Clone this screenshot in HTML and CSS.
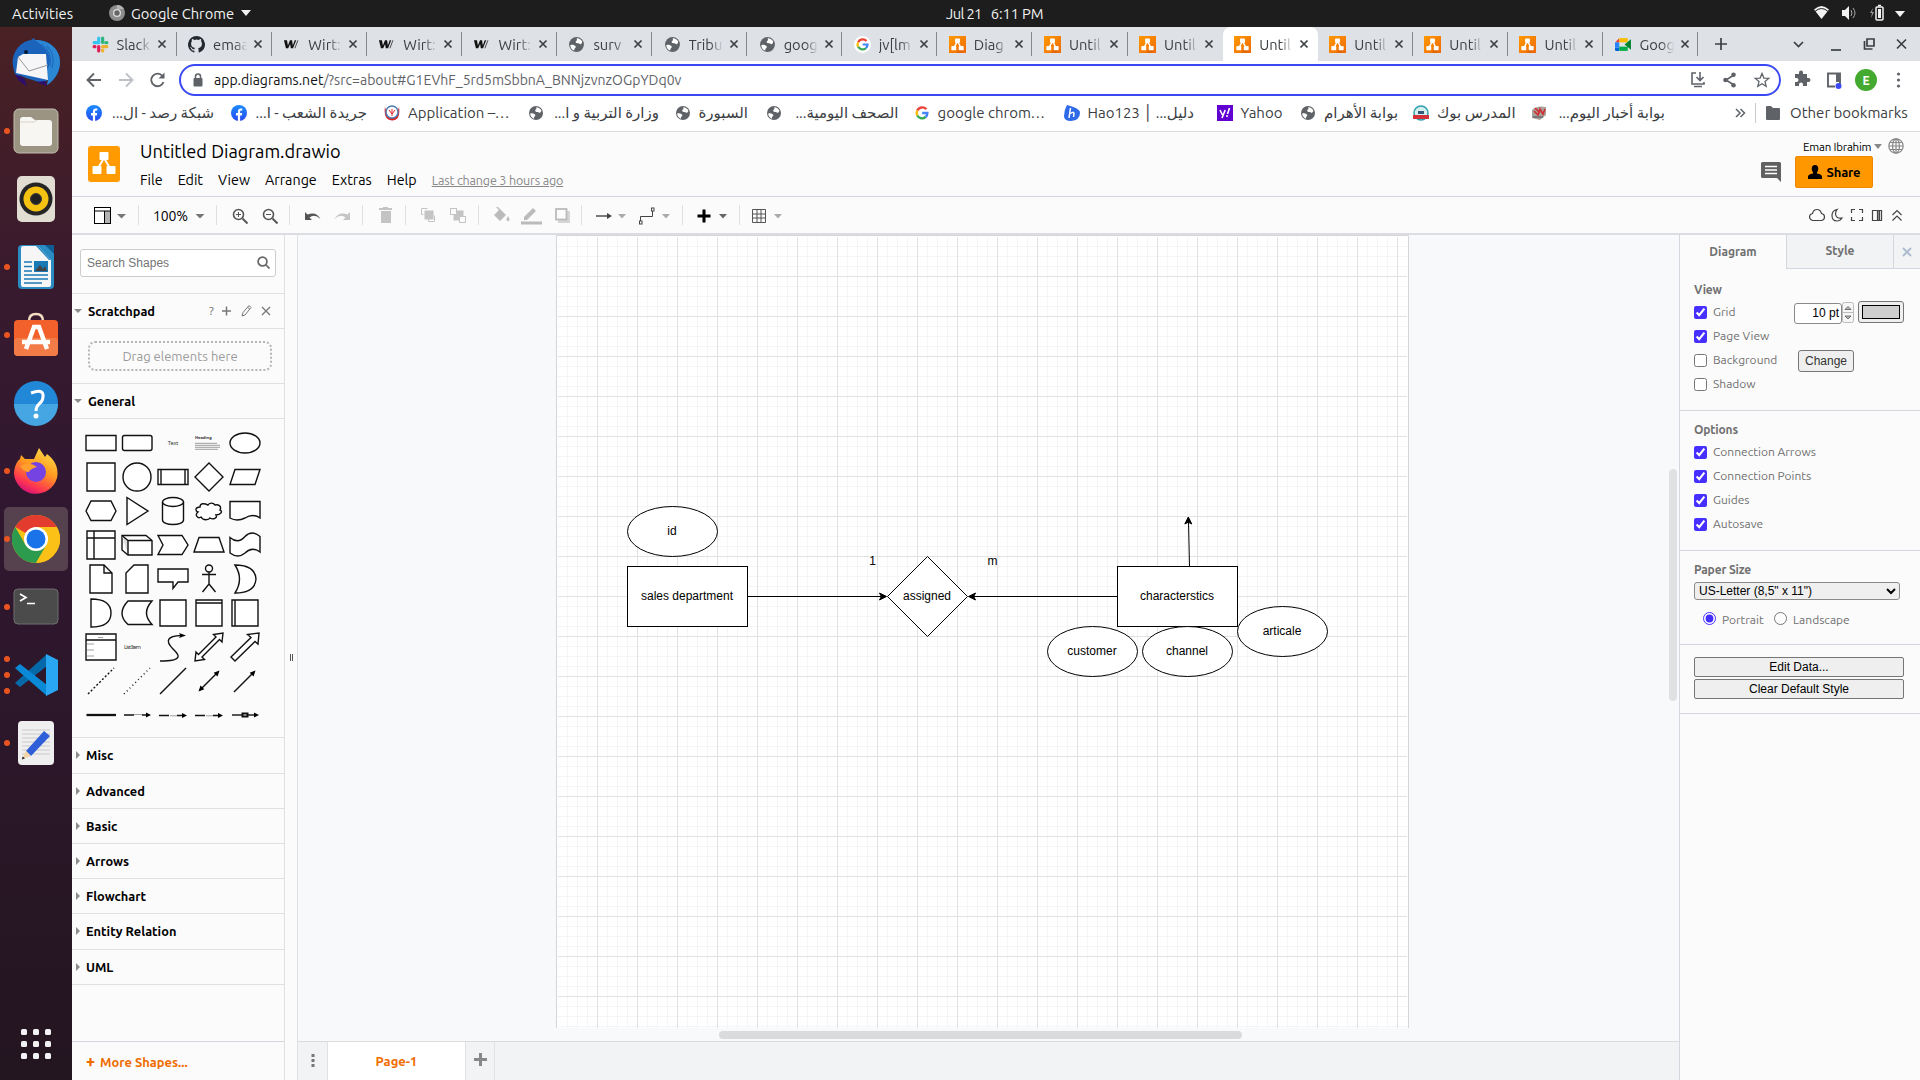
FILE: index.html
```html
<!DOCTYPE html>
<html lang="en">
<head>
<meta charset="utf-8">
<title>Untitled Diagram.drawio</title>
<link rel="stylesheet" href="styles.css">
</head>
<body>
<svg class="defs" width="0" height="0" aria-hidden="true">
  <defs>
    <linearGradient id="gOrange" x1="0" y1="0" x2="1" y2="1"><stop offset="0" stop-color="#f90"/><stop offset="1" stop-color="#ee6a0a"/></linearGradient>
    <linearGradient id="gFb" x1="0" y1="0" x2="0" y2="1"><stop offset="0" stop-color="#1a8cff"/><stop offset="1" stop-color="#2a4bf0"/></linearGradient>
    <symbol id="drawio" viewBox="0 0 16 16"><rect width="16" height="16" fill="url(#gOrange)"/><path d="M9 6l5 6-2 4H7l3-4z" fill="#d95f00" opacity=".6"/><path d="M8 5L4.6 11M8 5l3.4 6" stroke="#fff" stroke-width="1.3"/><rect x="5.7" y="2.4" width="4.6" height="4" rx=".6" fill="#fff"/><rect x="2.2" y="9.4" width="4.6" height="4" rx=".6" fill="#fff"/><rect x="9.2" y="9.4" width="4.6" height="4" rx=".6" fill="#fff"/></symbol>
    <symbol id="globe" viewBox="0 0 16 16"><circle cx="8" cy="8" r="7" fill="#5f6368"/><path d="M2.2 8.6C4 8 5.400 8.500 6.600 9.200c1.400.8.6 1.900-.2 2.400-.5.500-.2 1.700-.6 2.100C3.500 12.800 2.200 11 2.200 8.600z" fill="#fff"/><path d="M8.300 2.200c2.200 0 4.200 1.400 5.100 3.300-.4 1.300-.9 2.200-1.500 2.300-1 .2-1.100-.9-2-.9-1.200.1-2.700-.2-2.700-1.500 0-.9 1.200-.8 1.300-1.600 0-.5-.5-.8-.2-1.600z" fill="#fff"/></symbol>
    <symbol id="wirt" viewBox="0 0 18 16"><path d="M1 3.500h3.200l1 5.600L7.400 3.500h2.200l.8 5.600 2-5.600H14L10.600 12H8.300l-.8-4.600L5.500 12H3.100z" fill="#111"/><path d="M15.800 3.500L12.600 12" stroke="#444"/></symbol>
    <symbol id="google" viewBox="0 0 16 16"><g fill="none" stroke-width="2.400"><path d="M12.300 4.300A5.400 5.400 0 0 0 3.300 5.500" stroke="#ea4335"/><path d="M3.300 5.500a5.400 5.400 0 0 0 0 5" stroke="#fbbc05"/><path d="M3.300 10.500a5.400 5.400 0 0 0 8.300 1.500" stroke="#34a853"/><path d="M11.600 12a5.400 5.400 0 0 0 1.800-4H8.200" stroke="#4285f4"/></g></symbol>
    <symbol id="fb" viewBox="0 0 16 16"><circle cx="8" cy="8" r="8" fill="url(#gFb)"/><path d="M6.900 16v-5.600H5V8.100h1.900V6.500c0-2 1.200-3 2.900-3l1.500.1v2h-1c-.9 0-1.200.5-1.200 1.200v1.300h2.100l-.4 2.300H9.100V16z" fill="#fff"/></symbol>
    <symbol id="x" viewBox="0 0 10 10"><path d="M1.500 1.500l7 7M8.500 1.500l-7 7" stroke="#3c4043" stroke-width="1.700"/></symbol>
  </defs>
</svg>

<header class="topbar">
  <span class="activities">Activities</span>
  <svg class="app-ico" width="16" height="16"><circle cx="8" cy="8" r="8" fill="#8d8d8d"/><path d="M8 0a8 8 0 0 1 7 4H8z" fill="#b5b5b5"/><circle cx="8" cy="8" r="4" fill="#ddd"/><circle cx="8" cy="8" r="2.700" fill="#666"/></svg>
  <span class="app-name">Google Chrome</span>
  <svg class="caret" width="10" height="6"><path d="M0 0h10L5 6z" fill="#f2f2f2"/></svg>
  <span class="clock"><span>Jul 21</span><span>6:11 PM</span></span>
  <svg class="tray" width="96" height="20">
    <path d="M0 6.500Q7.500-.5 15 6.500L7.500 16z" fill="#f2f2f2"/><path d="M.8 6Q7.500 0 14.200 6" stroke="#1d1d1d" stroke-width="1" transform="translate(0 2.500)" fill="none"/>
    <path d="M28 7h3l4-4v14l-4-4h-3z" fill="#f2f2f2"/><path d="M37 7q2 3 0 6M39 5q4 5 0 10" stroke="#aaa" fill="none"/>
    <path d="M59 5l-3 5h2l-1 5 3-6h-2z" fill="#999"/><rect x="62" y="4" width="7" height="13" rx="1" fill="none" stroke="#f2f2f2" stroke-width="1.500"/><rect x="64" y="6" width="3" height="9" fill="#f2f2f2"/><path d="M64 2.500h3" stroke="#f2f2f2" stroke-width="1.500"/>
    <path d="M81 8h10l-5 6z" fill="#f2f2f2"/>
  </svg>
</header>

<div class="desk">
<nav class="dock">
  <div class="app"><svg width="50" height="50" viewBox="0 0 50 50"><path d="M2 28C0 16 8 4 20 2l3-2 1 2c14-1 25 9 25 22 0 9-4 17-13 23l1-5-6 3-16-5-7-3 6 9C7 43 3 36 2 28z" fill="#1c63bb"/><path d="M24 2c14 0 25 9 25 22 0 9-5 18-13 23 3-8-2-13 2-19C42 16 32 8 24 2z" fill="#2b86d3"/><path d="M30 6q12 8 9 22M36 8q9 9 5 22" stroke="#1c63bb" fill="none"/><path d="M7 19l5-3 23 0 2 26L5 35z" fill="#f6f6f8"/><path d="M7 19l11 14 19-6" stroke="#999" fill="none"/><path d="M4 36c3 7 6 9 12 12l-3-8zM25 44l9-1 2 5z" fill="#2e0f6b"/><circle cx="15" cy="14" r="2" fill="#0a1c3a"/></svg></div>
  <div class="app"><i class="dot"></i><svg width="46" height="46" viewBox="0 0 46 46"><rect x="1" y="1" width="44" height="44" rx="5" fill="#9c9483" stroke="#c4bdae"/><path d="M7 12q0-3 3-3h8l4 3h14q3 0 3 3v20q0 3-3 3H10q-3 0-3-3z" fill="#f8f6f3"/><path d="M7 14h14l3-2" stroke="#d8d2c8" fill="none"/></svg></div>
  <div class="app"><svg width="38" height="46" viewBox="0 0 38 46"><rect width="38" height="46" rx="5" fill="#e2ddd3"/><circle cx="19" cy="23" r="16.500" fill="#252525"/><circle cx="19" cy="23" r="12.500" fill="#f5c211"/><circle cx="19" cy="23" r="5.500" fill="#222" stroke="#3c3c3c"/></svg></div>
  <div class="app"><i class="dot"></i><svg width="38" height="46" viewBox="0 0 38 46"><rect x="1" y="1" width="36" height="44" rx="4" fill="#2b8cc4"/><path d="M4 4q0-2 2-2h15l13 14v25q0 2-2 2H6q-2 0-2-2z" fill="#f6f6f6"/><path d="M21 0h8l9 9v8z" fill="#3a1a2c" opacity=".0"/><path d="M28 1h9v9z" fill="#0d5c92"/><path d="M21 2l13 14h-2L19 2z" fill="#2b8cc4"/><path d="M7 18h8M7 22.500h8M7 27h8M7 31h24M7 35h24M7 39h18" stroke="#1a7ab5" stroke-width="1.700"/><rect x="17" y="17" width="14" height="11" fill="#1a7ab5"/><path d="M18 27l5-6 3 4 2-3 2 5z" fill="#444"/></svg></div>
  <div class="app"><i class="dot"></i><svg width="46" height="46" viewBox="0 0 46 46"><path d="M16 9q0-7 7-7t7 7" stroke="#f5dcc0" stroke-width="2.500" fill="none"/><rect x="1" y="8" width="44" height="36" rx="4" fill="#f2602c"/><rect x="1" y="26" width="44" height="18" rx="4" fill="#f37b47"/><path d="M13 37l8-22h5l8 22M9 30h28" stroke="#fff" stroke-width="4.500" fill="none"/></svg></div>
  <div class="app"><svg width="46" height="46" viewBox="0 0 46 46"><circle cx="23" cy="23" r="22" fill="#2188d8"/><path d="M1 24h44a22 22 0 0 1-44 0z" fill="#46a6e4"/><path d="M18 13q13-5 12 4 0 4-4 7-3 3-3 7" stroke="#fff" stroke-width="3" fill="none"/><circle cx="23" cy="36" r="2.500" fill="#fff"/></svg></div>
  <div class="app"><i class="dot"></i><svg width="48" height="48" viewBox="0 0 48 48"><defs><linearGradient id="ff" x1=".8" y1="0" x2=".3" y2="1"><stop offset="0" stop-color="#ffe04b"/><stop offset=".45" stop-color="#ff9a1f"/><stop offset=".8" stop-color="#ff3750"/><stop offset="1" stop-color="#d0107a"/></linearGradient></defs><path d="M8 12l1-4 4 4 9 0 5-11 6 9 2-3c8 6 12 14 10 24A22 22 0 0 1 2 27c0-6 2-12 6-15z" fill="url(#ff)"/><circle cx="24" cy="25" r="10" fill="#7543e2"/><path d="M8 19q10-5 17 1-7 2-8 5-5 0-9-6z" fill="#ffa02e"/></svg></div>
  <div class="app active"><i class="dot"></i><svg width="48" height="48" viewBox="-24 -24 48 48"><circle r="24" fill="#fbc116"/><path d="M0 0L-20.800-12A24 24 0 0 1 20.800-12H0z" fill="#e33b2e"/><path d="M-20.800-12A24 24 0 0 0 0 24L10.400 6-10.400 6z" fill="#2d9b4e"/><path d="M0 24L10.400 6 0-12H20.800A24 24 0 0 1 0 24z" fill="#fbc116"/><circle r="12" fill="#fff"/><circle r="9.500" fill="#1a73e8"/></svg></div>
  <div class="app"><i class="dot"></i><svg width="46" height="38" viewBox="0 0 46 38"><rect x="1" y="1" width="44" height="35" rx="4" fill="#4b4b4b" stroke="#6e6e6e"/><path d="M7 6l6 3.500L7 13M14 15.500h8" stroke="#fff" stroke-width="1.700" fill="none"/></svg></div>
  <div class="app"><i class="dot"></i><i class="dot"></i><i class="dot"></i><svg width="44" height="44" viewBox="0 0 44 44"><path d="M1 30l5 4 27-21V1z" fill="#0568a8"/><path d="M1 15l5-4 27 21v11z" fill="#0a8ad6"/><path d="M32 1l12 6v30l-12 6z" fill="#29a7f3"/></svg></div>
  <div class="app"><i class="dot"></i><svg width="38" height="46" viewBox="0 0 38 46"><rect x="1" y="1" width="36" height="44" rx="4" fill="#efefef"/><path d="M5 10h28M5 14h28M5 18h28M5 22h28M5 26h28M5 30h28M5 34h28" stroke="#c9c9c9"/><path d="M9 31L27 11l6 5-19 20z" fill="#2f5fd8"/><path d="M9 31l5 5-9 3z" fill="#f3d3a8"/><path d="M5.500 36.500l2.500 1.700-3 1.300z" fill="#222"/></svg></div>
  <div class="grid9"><i></i><i></i><i></i><i></i><i></i><i></i><i></i><i></i><i></i></div>
</nav>

<main class="browser">
  <div class="tabstrip">
    <div class="tab"><svg width="17" height="17" viewBox="0 0 16 16"><g stroke-width="3" stroke-linecap="round"><path d="M6.300 2v4" stroke="#36c5f0"/><path d="M2 6.300h4.300" stroke="#36c5f0"/><path d="M10 2v4M14 6.300h-1" stroke="#2eb67d"/><path d="M10 10h4M10 14v-.8" stroke="#ecb22e"/><path d="M6.300 10v4M2 10h.8" stroke="#e01e5a"/></g></svg><span>Slack</span><svg class="cl"><use href="#x"/></svg></div>
    <div class="tab"><svg width="17" height="17" viewBox="0 0 16 16"><path fill="#24292f" d="M8 0a8 8 0 0 0-2.500 15.600c.4.100.5-.2.500-.4v-1.500c-2 .4-2.600-.9-2.800-1.300-.1-.3-.5-1-.8-1.200-.3-.1-.7-.5 0-.5s1.100.6 1.300.8c.7 1.200 1.900.9 2.400.7.100-.5.300-.9.500-1.100-1.800-.2-3.700-.9-3.700-4 0-.9.300-1.600.8-2.100-.1-.2-.4-1 .1-2.100 0 0 .7-.2 2.200.8a7 7 0 0 1 4 0c1.500-1 2.200-.8 2.200-.8.400 1.100.2 1.900.1 2.100.5.600.8 1.300.8 2.200 0 3.100-1.900 3.800-3.700 4 .3.200.6.700.6 1.500v2.500c0 .2.100.5.500.4A8 8 0 0 0 8 0z"/></svg><span>emaa</span><svg class="cl"><use href="#x"/></svg></div>
    <div class="tab"><svg width="17" height="17"><use href="#wirt"/></svg><span>Wirt:</span><svg class="cl"><use href="#x"/></svg></div>
    <div class="tab"><svg width="17" height="17"><use href="#wirt"/></svg><span>Wirt:</span><svg class="cl"><use href="#x"/></svg></div>
    <div class="tab"><svg width="17" height="17"><use href="#wirt"/></svg><span>Wirt:</span><svg class="cl"><use href="#x"/></svg></div>
    <div class="tab"><svg width="17" height="17"><use href="#globe"/></svg><span>surv</span><svg class="cl"><use href="#x"/></svg></div>
    <div class="tab"><svg width="17" height="17"><use href="#globe"/></svg><span>Tribu</span><svg class="cl"><use href="#x"/></svg></div>
    <div class="tab"><svg width="17" height="17"><use href="#globe"/></svg><span>goog</span><svg class="cl"><use href="#x"/></svg></div>
    <div class="tab"><svg width="17" height="17" viewBox="0 0 16 16"><circle cx="8" cy="8" r="8" fill="#fff"/><use href="#google" x="1" y="1" width="14" height="14"/></svg><span>jv[lm</span><svg class="cl"><use href="#x"/></svg></div>
    <div class="tab"><svg width="17" height="17"><use href="#drawio"/></svg><span>Diag</span><svg class="cl"><use href="#x"/></svg></div>
    <div class="tab"><svg width="17" height="17"><use href="#drawio"/></svg><span>Until</span><svg class="cl"><use href="#x"/></svg></div>
    <div class="tab nosep"><svg width="17" height="17"><use href="#drawio"/></svg><span>Until</span><svg class="cl"><use href="#x"/></svg></div>
    <div class="tab current"><svg width="17" height="17"><use href="#drawio"/></svg><span>Until</span><svg class="cl"><use href="#x"/></svg></div>
    <div class="tab"><svg width="17" height="17"><use href="#drawio"/></svg><span>Until</span><svg class="cl"><use href="#x"/></svg></div>
    <div class="tab"><svg width="17" height="17"><use href="#drawio"/></svg><span>Until</span><svg class="cl"><use href="#x"/></svg></div>
    <div class="tab"><svg width="17" height="17"><use href="#drawio"/></svg><span>Until</span><svg class="cl"><use href="#x"/></svg></div>
    <div class="tab"><svg width="17" height="17" viewBox="0 0 16 16"><path d="M0 6l4-4v4z" fill="#ea4335"/><path d="M4 2h8v4H4z" fill="#fbbc04"/><path d="M0 6h4v5H0z" fill="#2684fc"/><path d="M0 11h4v3H1q-1 0-1-1z" fill="#0066da"/><path d="M4 10h8v4H4z" fill="#00ac47"/><path d="M9 8l6-5v10z" fill="#00832d"/></svg><span>Goog</span><svg class="cl"><use href="#x"/></svg></div>
    <svg class="win" width="221" height="34" fill="none" stroke="#3c4043" stroke-width="1.700"><path d="M17 17h12M23 11v12"/><path d="M96 15l4.500 4.500 4.500-4.500"/><path d="M133 23h10"/><path d="M169 12h7v7h-7zM166.500 14v8h8"/><path d="M199 12.500l9 9M208 12.500l-9 9"/></svg>
  </div>

  <div class="omni">
    <svg width="107" height="37" fill="none" stroke="#5f6368" stroke-width="1.900"><path d="M29 19H16M22 12.500L15.500 19l6.500 6.500"/><path d="M47 19h13M54 12.500l6.500 6.500-6.500 6.500" stroke="#bdc1c6"/><path d="M90.500 15a6.300 6.300 0 1 0 1 6"/><path d="M92.500 11.500v6h-6z" fill="#5f6368" stroke="none"/></svg>
    <div class="pill">
      <svg width="12" height="16"><rect x="1.500" y="6" width="9" height="8.500" rx="1" fill="#5f6368"/><path d="M3.500 7V4.500a2.500 2.500 0 0 1 5 0V7" stroke="#5f6368" stroke-width="1.500" fill="none"/></svg>
      <span class="url"><b>app.diagrams.net</b>/?src=about#G1EVhF_5rd5mSbbnA_BNNjzvnzOGpYDq0v</span>
      <svg width="84" height="20" fill="none" stroke="#5f6368" stroke-width="1.600"><path d="M7 3H3v11h12v-2M11 2v8M7.500 7l3.500 3.500L14.500 7M5 16.500h8"/><path d="M37 10l8-5M37 10l8 5"/><g fill="#5f6368" stroke="none"><circle cx="36.500" cy="10" r="2.300"/><circle cx="44.500" cy="4.700" r="2.300"/><circle cx="44.500" cy="15.300" r="2.300"/></g><path d="M73 3.500l1.900 4.600 4.900.3-3.800 3.200 1.200 4.800-4.200-2.600-4.200 2.600 1.200-4.800-3.800-3.200 4.900-.3z" stroke-width="1.300"/></svg>
    </div>
    <svg class="ext" width="139" height="37"><path d="M14 14h4v-1.500a2 2 0 0 1 4 0V14h4v4h1.500a2 2 0 0 1 0 4H26v4h-4v-1.500a2 2 0 0 0-4 0V26h-4v-4h1.500a2 2 0 0 0 0-4H14z" fill="#5f6368" transform="translate(0 -1)"/><path d="M59 23v-10.500H47V25.500h7" fill="none" stroke="#5f6368" stroke-width="1.900"/><path d="M55 12h4v9h-4z" fill="#5f6368"/><circle cx="57.500" cy="25" r="3" fill="#3b49f5"/><circle cx="85" cy="19" r="11" fill="#43a92f"/><text x="85" y="23.500" text-anchor="middle" class="ava">E</text><g fill="#5f6368"><circle cx="117.500" cy="13" r="1.600"/><circle cx="117.500" cy="19" r="1.600"/><circle cx="117.500" cy="25" r="1.600"/></g></svg>
  </div>

  <div class="bookmarks">
    <div><svg width="16" height="16"><use href="#fb"/></svg><span dir="rtl" style="width:104px">شبكة رصد - ال<i>...</i></span></div>
    <div><svg width="16" height="16"><use href="#fb"/></svg><span dir="rtl" style="width:112px">جريدة الشعب - ا<i>...</i></span></div>
    <div><svg width="16" height="16" viewBox="0 0 16 16"><path d="M1 2q-2 13 7 13.500T15 2l-2 6H3z" fill="#d8262c"/><circle cx="8" cy="7" r="6" fill="#fff" stroke="#4a7fb5" stroke-width="1.500"/><path d="M5 5l3 4 3-4M8 4v7" stroke="#d8262c" fill="none"/></svg><span>Application –<i>...</i></span></div>
    <div><svg width="16" height="16"><use href="#globe"/></svg><span dir="rtl" style="width:107px">وزارة التربية و ا<i>...</i></span></div>
    <div><svg width="16" height="16"><use href="#globe"/></svg><span dir="rtl">السبورة</span></div>
    <div><svg width="16" height="16"><use href="#globe"/></svg><span dir="rtl" style="width:109px">الصحف اليومية<i>...</i></span></div>
    <div><svg width="16" height="16"><use href="#google"/></svg><span>google chrom<i>...</i></span></div>
    <div><svg width="16" height="16" viewBox="0 0 16 16"><path d="M3 0q13 3 13 8 0 7-9 8-7 0-7-5Q0 5 3 0z" fill="#2f6ae8"/><path d="M6.500 3L5 13M5.700 9q4-3 4.300-.5L9.500 12" stroke="#fff" stroke-width="1.500" fill="none"/></svg><span>Hao123 │ <bdi dir="rtl">دليل<i>...</i></bdi></span></div>
    <div><svg width="16" height="16" viewBox="0 0 16 16"><rect width="16" height="16" fill="#6001d2"/><path d="M3 5l2.500 5M8.200 5L5 13M12.500 3l-2 6" stroke="#fff" stroke-width="1.600"/><circle cx="10" cy="11" r="1" fill="#fff"/></svg><span>Yahoo</span></div>
    <div><svg width="16" height="16"><use href="#globe"/></svg><span dir="rtl">بوابة الأهرام</span></div>
    <div><svg width="16" height="16" viewBox="0 0 16 16"><circle cx="8" cy="8" r="7" fill="#d5eef0" stroke="#2f9fae" stroke-width="1.500"/><path d="M5 6h6v3H5z" fill="#345a7a"/><path d="M0 10h16v4H0z" fill="#d3303a"/></svg><span dir="rtl">المدرس بوك</span></div>
    <div><svg width="16" height="16" viewBox="0 0 16 16"><path d="M1 5q5-5 14-3v8l-6 5-8-2z" fill="#a9a29a"/><path d="M3 6l4 4 2-6 3 5 2-5M4 3l5 5" stroke="#cf2f35" stroke-width="1.700" fill="none"/><path d="M2 12h10" stroke="#777" stroke-width="2"/></svg><span dir="rtl" style="width:110px">بوابة أخبار اليوم<i>...</i></span></div>
    <div class="other"><svg width="47" height="24"><path d="M1 8l4 4-4 4M5.500 8l4 4-4 4" stroke="#5f6368" stroke-width="1.500" fill="none"/><path d="M20.500 2v20" stroke="#c8cbd0"/><path d="M31 6q0-1 1-1h4l2 2h6q1 0 1 1v10q0 1-1 1H32q-1 0-1-1z" fill="#5f6368"/></svg><span>Other bookmarks</span></div>
  </div>

  <div class="apphead">
    <svg class="logo" width="32" height="36"><rect width="32" height="36" rx="3" fill="#ff9b00"/><path d="M16 12L9 24M16 12l7 12" stroke="#fff" stroke-width="2"/><rect x="11.500" y="6" width="9" height="8" rx="1" fill="#fff"/><rect x="4.500" y="20" width="9" height="8" rx="1" fill="#fff"/><rect x="18.500" y="20" width="9" height="8" rx="1" fill="#fff"/></svg>
    <div class="titles">
      <div class="doc">Untitled Diagram.drawio</div>
      <div class="menus"><span>File</span><span>Edit</span><span>View</span><span>Arrange</span><span>Extras</span><span>Help</span><a>Last change 3 hours ago</a></div>
    </div>
    <div class="user">
      <div class="who"><span>Eman Ibrahim</span><svg width="8" height="5"><path d="M0 0h8L4 5z" fill="#888"/></svg><svg width="16" height="16" fill="none" stroke="#888" stroke-width="1.200"><circle cx="8" cy="8" r="7.200"/><ellipse cx="8" cy="8" rx="3.400" ry="7.200"/><path d="M8 1v14M1 8h14M2 4.500h12M2 11.500h12"/></svg></div>
      <div class="acts"><svg width="20" height="20"><path d="M1.500 0h17Q20 0 20 1.500V20l-4-4H1.500Q0 16 0 14.500v-13Q0 0 1.500 0z" fill="#616161"/><path d="M4 4.500h12M4 8h12M4 11.500h12" stroke="#fff" stroke-width="1.500"/></svg><button class="share"><svg width="14" height="14"><path d="M7 0q3.300 0 3.300 4 0 2-1.300 3.300V8.500q5 1 5 3V14H0v-2.500q0-2 5-3V7.300Q3.700 6 3.700 4 3.700 0 7 0z"/></svg>Share</button></div>
    </div>
  </div>

  <div class="tools">
    <svg width="67" height="36"><rect x="22.500" y="10.500" width="16" height="16" fill="#fff" stroke="#000"/><rect x="33" y="14" width="5" height="12" fill="#b3b3b3"/><path d="M22 14h17M32.500 14v12" stroke="#000"/><path d="M45 17h9l-4.500 4.500z" fill="#777"/></svg>
    <svg width="78" height="36"><text x="14" y="24" class="pct" textLength="35">100%</text><path d="M56.500 17h9l-4.500 4.500z" fill="#777"/></svg>
    <svg width="73" height="36" fill="none" stroke="#555" stroke-width="1.600"><circle cx="21.500" cy="17.500" r="5"/><path d="M25.500 21.500l5 5" stroke-width="2"/><path d="M19 17.500h5M21.500 15v5" stroke-width="1"/><circle cx="51.500" cy="17.500" r="5"/><path d="M55.500 21.500l5 5" stroke-width="2"/><path d="M49 17.500h5" stroke-width="1"/></svg>
    <svg width="73" height="36"><path d="M15 15v8h7l-2.500-2.500q5-4 11 1.500-4-8-13-4.500z" fill="#555"/><path d="M60 15v8h-7l2.500-2.500q-5-4-11 1.500 4-8 13-4.500z" fill="#c4c4c4"/></svg>
    <svg width="43" height="36" fill="#c4c4c4"><path d="M16 11h4v-1h5v1h4v2H16zM18 14h10v12H18z"/></svg>
    <svg width="73" height="36" fill="none" stroke="#c4c4c4"><rect x="19" y="14" width="8" height="8" fill="#c4c4c4"/><path d="M21.500 11.500h-6v6h2M28.500 18.500v6h-6v-2"/><rect x="48" y="14" width="9" height="9" fill="#c4c4c4"/><rect x="44.500" y="11.500" width="6" height="6" fill="#fbfbfb"/><rect x="53.500" y="19.500" width="6" height="6" fill="#fbfbfb"/></svg>
    <svg width="103" height="36"><path d="M19 10l8 8-6 6-6-6 5-5-3-3z" fill="#bbb"/><path d="M29 19q3 5 0 5t0-5z" fill="#bbb"/><path d="M45 20l9-9 3 3-9 9h-3z" fill="#bbb"/><path d="M42 26h21" stroke="#bbb" stroke-width="3"/><rect x="79" y="14" width="12" height="12" fill="#d5d5d5"/><rect x="77" y="12" width="10.500" height="10.500" fill="#fbfbfb" stroke="#bbb" stroke-width="1.800"/></svg>
    <svg width="101" height="36"><path d="M14 19h14" stroke="#444" stroke-width="1.400"/><path d="M25 16l5 3-5 3z" fill="#444"/><path d="M36 17h8l-4 4.500z" fill="#aaa"/><path d="M58.500 25v-5.500h12V14" stroke="#444" fill="none"/><rect x="57.500" y="24" width="2.500" height="3" fill="#fff" stroke="#444"/><rect x="69.500" y="11" width="2.500" height="3" fill="#fff" stroke="#444"/><path d="M80 17h8l-4 4.500z" fill="#aaa"/></svg>
    <svg width="57" height="36"><path d="M14.500 19h13M21 12.500v13" stroke="#000" stroke-width="3"/><path d="M36 17h8l-4 4.500z" fill="#666"/></svg>
    <svg width="60" height="36" fill="none" stroke="#555"><path d="M12.500 12.500h13v13h-13zM17 12.500v13M21 12.500v13M12.500 17h13M12.500 21h13"/><path d="M34 17h8l-4 4.500z" fill="#aaa" stroke="none"/></svg>
    <svg class="view-tools" width="111" height="36" fill="none" stroke="#444" stroke-width="1.200"><path d="M3.500 23.500q-3-1-3-3.500 0-3 3-3.500 1-4 4.500-4t4.500 4q3 .5 3 3.500t-3 3.500z"/><path d="M28 12.500q-5 1-5 6 0 5.500 5 5.500 3 0 5-3-6 1-6.500-4 0-3 1.500-4.500z"/><path d="M42.500 16v-3.500H46M50 12.500h3.500V16M53.500 20v3.500H50M46 23.500h-3.500V20"/><path d="M63.500 13.500h9v10h-9z"/><path d="M68.500 13.500h2v10h-2z" fill="#999"/><path d="M83.500 18l4.500-4.500 4.500 4.500M83.500 23.500L88 19l4.500 4.500"/></svg>
  </div>

  <div class="work">
    <aside class="side">
      <div class="find"><div class="box"><span>Search Shapes</span><svg width="13" height="13" fill="none" stroke="#666" stroke-width="1.700"><circle cx="5.500" cy="5.500" r="4.400"/><path d="M8.500 8.500l4 4"/></svg></div></div>
      <div class="sec open h35">Scratchpad<svg class="sctl" width="64" height="14" stroke="#777" fill="none"><text x="1" y="11" class="q">?</text><path d="M14 7h9M18.500 2.500v9" stroke-width="1.500"/><path d="M34 12l1-3.500L41 1.500l2 2-6 7.500zM39.500 3l2 2"/><path d="M54 3l8 8M62 3l-8 8" stroke-width="1.300"/></svg></div>
      <div class="drop"><div>Drag elements here</div></div>
      <div class="sec open h35">General</div>
      <div class="palette">
        <svg viewBox="-18 -17 36 34"><path d="M-15-7.500h30v15h-30z"/></svg>
        <svg viewBox="-18 -17 36 34"><rect x="-14.500" y="-7.500" width="29.500" height="15" rx="2"/></svg>
        <svg viewBox="-18 -17 36 34"><text x="0" y="1.500" text-anchor="middle" class="t5">Text</text></svg>
        <svg viewBox="-18 -17 36 34"><text x="-14" y="-4" class="t4b">Heading</text><path d="M-14 .3h22M-14 2.300h25M-14 4.300h25M-14 6.300h23" class="lines"/></svg>
        <svg viewBox="-18 -17 36 34"><ellipse rx="15" ry="10"/></svg>
        <svg viewBox="-18 -17 36 34"><path d="M-14-14h28v28h-28z"/></svg>
        <svg viewBox="-18 -17 36 34"><circle r="14"/></svg>
        <svg viewBox="-18 -17 36 34"><path d="M-15-7.500h30v15h-30zM-12-7.500v15M12-7.500v15"/></svg>
        <svg viewBox="-18 -17 36 34"><path d="M0-14L14 0 0 14-14 0z"/></svg>
        <svg viewBox="-18 -17 36 34"><path d="M-10-7.500h25l-5 15h-25z"/></svg>
        <svg viewBox="-18 -17 36 34"><path d="M-15 0l5-10h20l5 10-5 9.500h-20z"/></svg>
        <svg viewBox="-18 -17 36 34"><path d="M-10-13.500L11 0l-21 13.500z"/></svg>
        <svg viewBox="-18 -17 36 34"><path d="M-10.500-9v18c0 6 21 6 21 0V-9"/><ellipse cy="-9" rx="10.500" ry="4.500"/></svg>
        <svg viewBox="-18 -17 36 34"><path d="M-9-4c-5 0-5 4-2 5-4 3 0 7 3 5 2 4 8 3 9 1 3 2 8 0 6-3 5 0 7-4 4-5 2-4-2-6-5-5-2-3-6-2-7 0-4-2-8-2-8 2z"/></svg>
        <svg viewBox="-18 -17 36 34"><path d="M-15-9.500h30V7q-7-5-15 0-8 4-15 0z"/></svg>
        <svg viewBox="-18 -17 36 34"><path d="M-14-14h28v28h-28zM-7-14v28M-14-7h28"/></svg>
        <svg viewBox="-18 -17 36 34"><path d="M-15-9.500h24l6 5V10h-24l-6-5z"/><path d="M-15-9.500l6 5V10M-9-4.500h24" fill="#ddd"/></svg>
        <svg viewBox="-18 -17 36 34"><path d="M-15-9.500h24L15 0 9 9.500h-24L-10 0z"/></svg>
        <svg viewBox="-18 -17 36 34"><path d="M-15 7l5-14.500h20L15 7z"/></svg>
        <svg viewBox="-18 -17 36 34"><path d="M-15-7.500q8 7 15-1 7-7 15 0V7q-8-6-15 1-7 6-15 0z"/></svg>
        <svg viewBox="-18 -17 36 34"><path d="M-11-14H3l8 8v20h-22zM3-14v8h8"/></svg>
        <svg viewBox="-18 -17 36 34"><path d="M-3-14h14v28h-22V-6z"/></svg>
        <svg viewBox="-18 -17 36 34"><path d="M-15-10h30V3H5l-5 6.500V3h-15z"/></svg>
        <svg viewBox="-18 -17 36 34"><circle cy="-10.500" r="3.500"/><path d="M0-7V5l-6.500 8M0 5l6.500 8M-7-4.500H7"/></svg>
        <svg viewBox="-18 -17 36 34"><path d="M-10-14Q10-14 11 0 10 14-10 14-1 0-10-14z"/></svg>
        <svg viewBox="-18 -17 36 34"><path d="M-10-14q20 0 20 14t-20 14z"/></svg>
        <svg viewBox="-18 -17 36 34"><path d="M-9-12h24q-11 12 0 23.500H-9q-12-11 0-23.500z"/></svg>
        <svg viewBox="-18 -17 36 34"><path d="M-13-13h26v26h-26z"/></svg>
        <svg viewBox="-18 -17 36 34"><path d="M-13-13h26v26h-26zM-13-10h26"/></svg>
        <svg viewBox="-18 -17 36 34"><path d="M-13-13h26v26h-26zM-10-13v26"/></svg>
        <svg viewBox="-18 -17 36 34"><path d="M-15-13h30v26h-30zM-15-7h30"/><path d="M-3-9.500h5M-14-3h7M-14 3h7M-14 9h7" class="lines"/></svg>
        <svg viewBox="-18 -17 36 34"><text x="-13" y="1.500" class="li" textLength="17">List Item</text></svg>
        <svg viewBox="-18 -17 36 34"><path d="M-13 14C14 14 4 6 0 2-8-6-6-11 8-11.500" fill="none"/><path d="M6-14l7 2.500L6-9l1.500-2.500z" class="k"/></svg>
        <svg viewBox="-18 -17 36 34"><path d="M14-14l-1 9-2.500-2.500L-7 10l2.500 2.500-9.500 1.500 1-9 2.500 2.500L7-10 4.500-12.500z"/></svg>
        <svg viewBox="-18 -17 36 34"><path d="M14-14l-1 11-3-2.500L-10 14l-4-4L6-9.500 2.500-12.500z"/></svg>
        <svg viewBox="-18 -17 36 34"><path d="M-13 13L13-13" stroke-dasharray="2 2"/></svg>
        <svg viewBox="-18 -17 36 34"><path d="M-13 13L13-13" stroke-dasharray="1 3"/></svg>
        <svg viewBox="-18 -17 36 34"><path d="M-13 13L13-13"/></svg>
        <svg viewBox="-18 -17 36 34"><path d="M-9 9L9-9"/><path d="M10.500-10.500l-2 6-3.800-3.800zM-10.500 10.500l2-6 3.800 3.800z" class="k"/></svg>
        <svg viewBox="-18 -17 36 34"><path d="M-11 11L9-9"/><path d="M10.500-10.500l-2 6-3.800-3.800z" class="k"/></svg>
        <svg viewBox="-18 -17 36 34"><path d="M-14.500 0h29.500" stroke-width="2.300"/></svg>
        <svg viewBox="-18 -17 36 34"><path d="M-13 0h10M5 0h6"/><path d="M-3-.5h8" class="lines"/><path d="M14 0L9-2.500v5z" class="k"/></svg>
        <svg viewBox="-18 -17 36 34"><path d="M-14 .5h10M4 .5h7"/><path d="M-3 .8h7" class="lines"/><path d="M14 .5L9-2v5z" class="k"/></svg>
        <svg viewBox="-18 -17 36 34"><path d="M-14 .5h10M4 .5h7"/><path d="M-3 .8h7" class="lines"/><path d="M14 .5L9-2v5z" class="k"/></svg>
        <svg viewBox="-18 -17 36 34"><path d="M-13 0h24"/><path d="M-2.500-1.500h5v3h-5z" stroke-width="2"/><path d="M14 0L9-2.500v5z" class="k"/></svg>
      </div>
      <div class="sec h36">Misc</div>
      <div class="sec h35">Advanced</div>
      <div class="sec h35">Basic</div>
      <div class="sec h35">Arrows</div>
      <div class="sec h35">Flowchart</div>
      <div class="sec h36">Entity Relation</div>
      <div class="sec h35">UML</div>
      <div class="more"><b>+</b> More Shapes...</div>
    </aside>
    <div class="split"><i></i><i></i></div>

    <section class="center">
      <div class="canvas">
        <svg class="page" width="853" height="793" viewBox="556 235 853 793">
          <defs>
            <pattern id="minor" x="7" y="6" width="10" height="10" patternUnits="userSpaceOnUse"><path d="M.5 0v10M0 .5h10" stroke="#f5f5f5"/></pattern>
            <pattern id="major" x="37" y="36" width="40" height="40" patternUnits="userSpaceOnUse"><path d="M.5 0v40M0 .5h40" stroke="#e2e2e2"/></pattern>
          </defs>
          <rect x="556" y="235" width="853" height="793" fill="#fff"/>
          <rect x="558" y="237" width="849" height="791" fill="url(#minor)"/>
          <rect x="558" y="237" width="849" height="791" fill="url(#major)"/>
          <path d="M556.500 1028V235.500h852V1028" fill="none" stroke="#d4d6da"/>
          <g class="shape">
            <ellipse cx="672.500" cy="531.500" rx="45" ry="25"/>
            <rect x="627.500" y="566.500" width="120" height="60"/>
            <path d="M927.500 556.500l40 40-40 40-40-40z"/>
            <rect x="1117.500" y="566.500" width="120" height="60"/>
            <ellipse cx="1092.500" cy="651.500" rx="45" ry="25"/>
            <ellipse cx="1187.500" cy="651.500" rx="45" ry="25"/>
            <ellipse cx="1282.500" cy="631.500" rx="45" ry="25"/>
            <path d="M747.500 596.500H882M1117.500 596.500H973M1189.500 567l-1-46"/>
          </g>
          <path d="M886.500 596.500l-7-3.500 1.800 3.500-1.800 3.500zM968.500 596.500l7-3.500-1.800 3.500 1.800 3.500zM1188.300 517l-3.500 7 3.500-1.800 3.500 1.800z" stroke="#000"/>
          <g class="lbl">
            <text x="672" y="535">id</text><text x="687" y="600">sales department</text><text x="872.500" y="565">1</text><text x="992.500" y="565">m</text><text x="927" y="600">assigned</text><text x="1177" y="600">characterstics</text><text x="1092" y="655">customer</text><text x="1187" y="655">channel</text><text x="1282" y="635">articale</text>
          </g>
        </svg>
        <div class="vbar"></div>
        <div class="hbar"></div>
      </div>
      <div class="pages">
        <div class="pm"><svg width="4" height="14" fill="#777"><path d="M.5 0h3v3h-3zM.5 5h3v3h-3zM.5 10h3v3h-3z"/></svg></div><div class="pg">Page-1</div><div class="pa"><svg width="13" height="13"><path d="M0 6.500h13M6.500 0v13" stroke="#888" stroke-width="3"/></svg></div>
      </div>
    </section>

    <aside class="format">
      <div class="ftabs"><b class="on">Diagram</b><b>Style</b><b class="fx"><svg width="10" height="10"><path d="M1 1l8 8M9 1L1 9" stroke="#b0bdd0" stroke-width="2"/></svg></b></div>
      <div class="fs s1">
        <h4>View</h4>
        <div class="row"><input type="checkbox" checked><label>Grid</label><div class="num">10 pt</div><svg class="spin" width="12" height="21"><rect x=".5" y=".5" width="11" height="20" rx="2" fill="#f6f6f6" stroke="#bbb"/><path d="M1 10.500h10" stroke="#bbb"/><path d="M3 7.500h6L6 4.500zM3 14h6l-3 3z" fill="#bbb" stroke="#555" stroke-width=".8"/></svg><div class="swatch"><i></i></div></div>
        <div class="row"><input type="checkbox" checked><label>Page View</label></div>
        <div class="row"><input type="checkbox"><label>Background</label><div class="chg">Change</div></div>
        <div class="row"><input type="checkbox"><label>Shadow</label></div>
      </div>
      <div class="fs s2">
        <h4>Options</h4>
        <div class="row"><input type="checkbox" checked><label>Connection Arrows</label></div>
        <div class="row"><input type="checkbox" checked><label>Connection Points</label></div>
        <div class="row"><input type="checkbox" checked><label>Guides</label></div>
        <div class="row"><input type="checkbox" checked><label>Autosave</label></div>
      </div>
      <div class="fs s3">
        <h4>Paper Size</h4>
        <div class="sel"><span>US-Letter (8,5" x 11")</span><svg width="10" height="7"><path d="M1 1l4 4 4-4" stroke="#000" stroke-width="2" fill="none"/></svg></div>
        <div class="radios"><input type="radio" name="o" checked><label>Portrait</label><input type="radio" name="o"><label>Landscape</label></div>
      </div>
      <div class="fs s4"><div class="btn">Edit Data...</div><div class="btn">Clear Default Style</div></div>
    </aside>
  </div>
</main>
</div>
</body>
</html>
```
FILE: styles.css
```css
* { box-sizing: border-box; }
body { margin: 0; width: 1920px; height: 1080px; overflow: hidden; font-family: Ubuntu, "Noto Sans", "DejaVu Sans", sans-serif; color: #3c4043; }
svg { display: block; flex: none; }
.defs { position: absolute; }

.topbar { display: flex; align-items: center; height: 27px; background: #1d1d1d; color: #f2f2f2; font-size: 14.7px; padding: 0 0 1px 12px; white-space: nowrap; }
.activities { width: 97px; letter-spacing: .1px; }
.app-name { margin-left: 6px; width: 104px; letter-spacing: 0; }
.caret { margin-left: 6px; }
.clock { display: flex; gap: 9px; margin-left: 695px; width: 868px; letter-spacing: -.1px; }
.clock span:first-child { letter-spacing: -.6px; }

.desk { display: flex; height: 1053px; }
.dock { width: 72px; flex: none; background: linear-gradient(#4a2124, #381a2e 25%, #301730 45%, #2b1729 70%, #231520); padding-top: 4px; display: flex; flex-direction: column; }
.app { height: 64px; margin: 0 4px 4px; border-radius: 5px; display: grid; grid-template-columns: 6px 52px; align-content: center; place-items: center; justify-content: start; row-gap: 3px; }
.app svg { grid-column: 2; grid-row: 1 / span 3; }
.app.active { background: #56414f; }
.dot { grid-column: 1; grid-row: 1 / span 3; width: 6px; height: 6px; border-radius: 50%; background: #e95420; }
.dot:nth-of-type(1):not(:nth-last-of-type(1)) { grid-row: 1; }
.dot:nth-of-type(2) { grid-row: 2; }
.dot:nth-of-type(3) { grid-row: 3; }
.grid9 { margin: auto auto 21px 21px; display: grid; grid-template-columns: repeat(3, 6px); gap: 6px; }
.grid9 i { height: 6px; background: #f2f2f2; border-radius: 1.5px; }

.browser { flex: 1; min-width: 0; display: flex; flex-direction: column; background: #fff; }
.tabstrip { height: 34px; background: #dee1e6; display: flex; padding-left: 9.5px; }
.tab { width: 95.1px; flex: none; display: flex; align-items: center; padding: 0 0 0 11.5px; font-size: 14.7px; }
.tab:first-child { padding-left: 10px; }
.tab span { width: 35px; margin-left: 8px; white-space: nowrap; -webkit-mask-image: linear-gradient(90deg, #000 60%, transparent 98%); mask-image: linear-gradient(90deg, #000 60%, transparent 98%); }
.tab .cl { width: 10px; height: 10px; margin-left: 5px; }
.tab::after { content: ""; width: 1px; height: 24px; background: #85888d; margin-left: auto; }
.tab.nosep::after, .tab.current::after { visibility: hidden; }
.tab.current { background: #fff; border-radius: 8px 8px 0 0; }

.omni { height: 37px; display: flex; align-items: center; }
.pill { width: 1602px; height: 32px; border: 2px solid #3b49f5; border-radius: 16px; display: flex; align-items: center; padding: 0 6px 0 11px; }
.url { margin-left: 10px; flex: 1; font-size: 14px; color: #5f6368; letter-spacing: .02px; }
.url b { font-weight: 400; color: #111; }
.ava { font: 600 12px Ubuntu, "Noto Sans", sans-serif; fill: #fff; }

.bookmarks { height: 34px; border-bottom: 1px solid #dadce0; display: grid; grid-template-columns: 145px 153px 144px 146.5px 91px 148px 150px 153px 83.5px 113px 118px 204px 1fr; padding: 0 10px 4px 14px; align-items: center; font-size: 15px; white-space: nowrap; }
.bookmarks > div { display: flex; align-items: center; gap: 8px; }
.bookmarks i { font-style: normal; letter-spacing: 1.3px; }

.apphead { height: 65px; background: #fbfbfb; border-bottom: 1px solid #d5d7de; display: flex; color: #000; }
.logo { margin: 14px 0 0 16px; }
.titles { margin-left: 20px; flex: 1; }
.doc { font-size: 18.2px; line-height: 26px; margin-top: 6px; }
.menus { display: flex; font-size: 14.3px; line-height: 22px; margin-top: 5px; }
.menus span { margin-right: 15px; }
.menus a { font-size: 12.5px; color: #888; text-decoration: underline; letter-spacing: -.15px; }
.user { width: 166px; }
.who { display: flex; align-items: center; margin: 6px 0 0 49px; height: 16px; font-size: 11.5px; }
.who span { width: 71px; white-space: nowrap; letter-spacing: -.2px; }
.who svg + svg { margin-left: 6px; }
.acts { display: flex; align-items: center; margin: 2px 0 0 7px; }
.share { margin-left: 14px; width: 78px; height: 32px; border: 1px solid #f08705; border-radius: 2px; background: #ff9800; font: 700 13px Ubuntu, "Noto Sans", sans-serif; display: flex; align-items: center; justify-content: center; gap: 5px; padding: 0; letter-spacing: -.2px; }

.tools { height: 38px; background: #fbfbfb; border-bottom: 2px solid #dcdde2; display: flex; }
.tools > svg:not(:nth-last-child(-n+2)) { background: linear-gradient(#e0e0e0, #e0e0e0) right center / 1px 20px no-repeat; }
.view-tools { margin-left: auto; }
.pct { font-size: 14px; fill: #000; }

.work { flex: 1; display: flex; min-height: 0; }
.side { width: 213px; border-right: 1px solid #e0e0e0; background: #fbfbfb; display: flex; flex-direction: column; }
.find { height: 59px; border-bottom: 1px solid #e0e0e0; padding: 14px 8px; }
.box { height: 28px; border: 1px solid #ccc; border-radius: 3px; background: #fff; display: flex; justify-content: space-between; align-items: center; padding: 0 5px 0 6px; font: 12px "Liberation Sans", sans-serif; color: #757575; }
.box svg { margin-top: -2px; }
.sec { border-bottom: 1px solid #e0e0e0; display: flex; align-items: center; font-size: 12.8px; font-weight: 600; color: #000; padding: 0 12px 0 4px; }
.sec::before { content: ""; border: 4px solid transparent; border-left-color: #8c8c8c; border-right: 0; margin-right: 6px; }
.sec.open::before { border: 4px solid transparent; border-top-color: #8c8c8c; border-bottom: 0; margin: 0 6px 0 -2px; }
.sec.open { padding-left: 4px; }
.h35 { height: 35px; }
.h36 { height: 36px; padding-bottom: 1px; }
.sctl { margin-left: auto; }
.q { font: 11px "Noto Sans", sans-serif; fill: #777; stroke: none; }
.drop { height: 55px; border-bottom: 1px solid #e0e0e0; padding: 12px 12px 12px 16px; }
.drop div { height: 30px; border: 2px dotted #b5b5b5; border-radius: 7px; text-align: center; font-size: 13px; line-height: 26px; color: #9b9b9b; }
.palette { height: 319px; border-bottom: 1px solid #e0e0e0; display: grid; grid-template-columns: repeat(5, 36px); grid-auto-rows: 34px; padding: 6.5px 0 0 10.5px; }
.palette svg { width: 36px; height: 34px; fill: #fff; stroke: #111; stroke-width: 1.4; }
.palette .lines { stroke: #777; stroke-width: .7; fill: none; }
.palette .k { fill: #000; stroke: none; }
.palette text { stroke: none; fill: #333; font: 5.5px "Noto Sans", sans-serif; }
.palette .t4b { font-size: 4px; font-weight: 700; }
.more { margin-top: auto; height: 39px; border-top: 1px solid #d5d7de; color: #ef6c00; font-size: 12.9px; font-weight: 600; line-height: 40px; padding-left: 14px; }
.more b { font-weight: 800; font-size: 16px; margin-right: 2px; line-height: 20px; }
.split { width: 13px; background: #fbfbfb; border-right: 1px solid #e0e0e0; display: flex; gap: 1px; align-items: center; justify-content: center; }
.split i { width: 1px; height: 7px; background: #555; }

.center { width: 1381px; display: flex; flex-direction: column; }
.canvas { height: 807px; background: #f8f9fb; display: grid; grid-template-columns: 258px 853px 1fr; grid-template-rows: 793px 13px; border-bottom: 1px solid #dadce0; }
.page { grid-column: 2; }
.vbar { grid-column: 3; width: 8px; height: 232px; margin: 234px 2px 0 auto; border-radius: 4px; background: #e0e1e3; }
.hbar { grid-column: 1 / 4; grid-row: 2; width: 523px; height: 8px; margin: 3px 0 0 421px; border-radius: 4px; background: #dadbdd; }
.shape { fill: #fff; stroke: #000; }
.lbl { font: 12px "Liberation Sans", sans-serif; text-anchor: middle; fill: #000; }
.pages { flex: 1; background: #f1f3f4; display: flex; }
.pages > div { display: flex; align-items: center; justify-content: center; border-right: 1px solid #dfe1e5; }
.pm { width: 30px; }
.pg { width: 138px; background: #fff; color: #ef6c00; font-weight: 600; font-size: 13px; }
.pa { width: 29px; padding-bottom: 4px; }

.format { width: 241px; border-left: 1px solid #d5d7de; background: #fbfbfb; color: #707070; font-size: 12px; }
.ftabs { height: 34px; display: flex; line-height: 31px; text-align: center; }
.ftabs b { width: 107px; background: #f1f3f4; border: solid #d5d7de; border-width: 0 0 1px 1px; font-weight: 700; }
.ftabs .on { width: 106px; background: none; border: 0; line-height: 33px; }
.ftabs .fx { width: 27px; display: flex; align-items: center; justify-content: center; }
.fs { border-bottom: 1px solid #d5d7de; padding-left: 14px; }
.fs h4 { margin: 0; font-size: 12px; font-weight: 700; line-height: 16px; letter-spacing: -.15px; }
.s1 { height: 142px; padding-top: 13px; }
.s1 h4, .s2 h4 { margin-bottom: 2px; }
.s2 { height: 140px; padding-top: 11px; }
.s3 { height: 94px; padding-top: 11px; }
.s4 { height: 69px; padding-top: 12px; }
.row { height: 24px; display: flex; align-items: center; }
.fs input { width: 13px; height: 13px; margin: 0; accent-color: #4630ff; flex: none; }
.row label { margin: -2px 0 0 6px; width: 81px; flex: none; white-space: nowrap; }
.num { width: 48px; height: 21px; border: 1px solid #8a8a8a; border-radius: 3px; background: #fff; color: #000; font: 12px/19px "Liberation Sans", sans-serif; text-align: right; padding-right: 2px; margin-top: 2px; }
.swatch { margin-left: 4px; width: 46px; height: 22px; border: 1px solid #767676; border-radius: 3px; background: #efefef; padding: 3px; }
.swatch i { display: block; height: 14px; border: 1px solid #000; background: #cfcfcf; }
.chg { margin: 1px 0 0 4px; width: 56px; height: 22px; border: 1px solid #767676; border-radius: 3px; background: #efefef; color: #333; font: 12px/20px "Liberation Sans", sans-serif; text-align: center; }
.sel { margin-top: 4px; width: 206px; height: 18px; border: 1px solid #8a8a8a; border-radius: 3px; background: #efefef; color: #000; display: flex; align-items: center; justify-content: space-between; padding: 0 3px 0 4px; font: 12px "Liberation Sans", sans-serif; }
.radios { display: flex; align-items: center; height: 20px; margin-top: 8px; padding-left: 9px; }
.radios label { margin: 3px 0 0 6px; width: 52px; }
.radios label:last-child { width: auto; }
.btn { width: 210px; height: 20px; margin-bottom: 2px; border: 1px solid #767676; border-radius: 2px; background: #efefef; color: #000; font: 12px/18px "Liberation Sans", sans-serif; text-align: center; }
```
